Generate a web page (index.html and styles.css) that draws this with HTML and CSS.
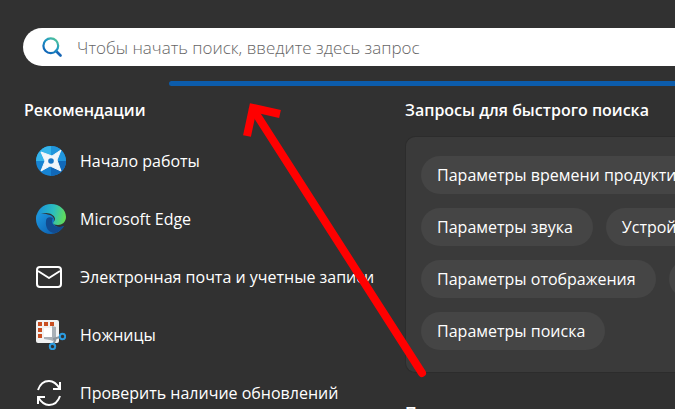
FILE: index.html
```html
<!DOCTYPE html>
<html lang="ru">
<head>
  <meta charset="UTF-8">
  <meta name="viewport" content="width=device-width, initial-scale=1.0">
  <title>Поиск</title>
  <link rel="stylesheet" href="styles.css">
</head>
<body>
  <form class="search">
    <svg class="search-icon" viewBox="0 0 20 20" fill="none">
      <defs>
        <linearGradient id="lens" x1="16" y1="1" x2="5" y2="15" gradientUnits="userSpaceOnUse">
          <stop offset="0" stop-color="#5fd08c"/>
          <stop offset="0.5" stop-color="#1f98c4"/>
          <stop offset="1" stop-color="#1268b8"/>
        </linearGradient>
      </defs>
      <path d="M14 14l4.500 4.500" stroke="#1766b5" stroke-width="2.600" stroke-linecap="round"/>
      <circle cx="8.800" cy="8.800" r="7.400" stroke="url(#lens)" stroke-width="2.200"/>
    </svg>
    <input class="search-input" type="text" aria-label="Поиск" placeholder="Чтобы начать поиск, введите здесь запрос">
  </form>
  <div class="underline"></div>

  <main class="columns">
    <section class="recommended">
      <h2 class="title">Рекомендации</h2>
      <ul class="apps">
        <li>
          <button class="app" type="button">
            <svg class="app-icon" viewBox="0 0 30 30">
              <circle cx="15" cy="15" r="15" fill="#1683d2"/>
              <path d="M15 15V0A15 15 0 0 0 0 15z" fill="#35b4ea"/>
              <path d="M15 15H30A15 15 0 0 0 15 0z" fill="#2196dc"/>
              <path d="M15 15V30A15 15 0 0 0 30 15z" fill="#1168b8"/>
              <path d="M5 6l11 4 9-6-4 10 4 11-11-5-9 5 4-10z" fill="#f1f6fa" stroke="#f1f6fa" stroke-linejoin="round"/>
              <circle cx="15" cy="15" r="2.800" fill="#1976c4"/>
            </svg>
            Начало работы
          </button>
        </li>
        <li>
          <button class="app" type="button">
            <svg class="app-icon" viewBox="0 0 30 30">
              <defs>
                <linearGradient id="wave" x1="2" y1="10" x2="30" y2="16" gradientUnits="userSpaceOnUse">
                  <stop offset="0" stop-color="#1b94d8"/>
                  <stop offset="0.5" stop-color="#2bbdc0"/>
                  <stop offset="1" stop-color="#68df4d"/>
                </linearGradient>
                <linearGradient id="body" x1="2" y1="12" x2="18" y2="28" gradientUnits="userSpaceOnUse">
                  <stop offset="0" stop-color="#1c93dc"/>
                  <stop offset="1" stop-color="#0d63b4"/>
                </linearGradient>
              </defs>
              <path d="M0 15C0 7 7 9 14 11c5 2 5 6 3 8 2 4 7 5 11 3-3 5-8 8-13 8C6 30 0 23 0 15z" fill="url(#body)"/>
              <path d="M10 17c-1 7 3 12 9 12 4-1 7-4 9-7-5 2-11 1-12-4 0-3 1-4 1-4-4-2-7 0-7 3z" fill="#124b8f"/>
              <path d="M0 14C1 6 7 0 15 0c9 0 15 6 15 13 0 5-4 8-8 8-3 0-5-1-5-2s2-2 2-4c0-3-4-6-9-6-5 0-9 2-10 5z" fill="url(#wave)"/>
            </svg>
            Microsoft Edge
          </button>
        </li>
        <li>
          <button class="app" type="button">
            <svg class="app-icon" viewBox="0 0 30 30" fill="none" stroke="#fff" stroke-width="2" stroke-linejoin="round">
              <rect x="1" y="5" width="24" height="20" rx="3"/>
              <path d="M2 9l11 7 11-7"/>
            </svg>
            Электронная почта и учетные записи
          </button>
        </li>
        <li>
          <button class="app" type="button">
            <svg class="app-icon" viewBox="0 0 30 30" fill="none">
              <rect width="23" height="23" rx="2" fill="#f2f2f2"/>
              <path d="M2 2h4v4H2zM8 2h4v4H8zM14 2h4v4h-4zM2 8h4v4H2zM2 14h4v4H2z" fill="#c94f22"/>
              <path d="M8 8h9v10H8z" fill="#fff"/>
              <path d="M16 6l4 1v13l-3 1-3-1-6-1v-2h8z" fill="#a9b0b7"/>
              <path d="M17 19l7-2M20 18l-3 7" stroke="#8d969e" stroke-width="2"/>
              <circle cx="26.500" cy="16.500" r="2.700" stroke="#2b9ade" stroke-width="2"/>
              <circle cx="16.500" cy="26.500" r="2.700" stroke="#2b9ade" stroke-width="2"/>
            </svg>
            Ножницы
          </button>
        </li>
        <li>
          <button class="app" type="button">
            <svg class="app-icon" viewBox="0 0 30 30" fill="none" stroke="#fff" stroke-width="2">
              <path d="M2 12C4 6 8 3 13 3c5 0 8 3 11 8M24 4v7h-7M24 18c-2 6-6 9-11 9-5 0-8-3-11-8M2 26v-7h7"/>
            </svg>
            Проверить наличие обновлений
          </button>
        </li>
      </ul>
    </section>

    <section class="quick">
      <h2 class="title">Запросы для быстрого поиска</h2>
      <div class="panel">
        <div class="row">
          <button class="chip" type="button">Параметры времени продуктивности</button>
        </div>
        <div class="row">
          <button class="chip" type="button">Параметры звука</button>
          <button class="chip" type="button">Устройства</button>
        </div>
        <div class="row">
          <button class="chip" type="button">Параметры отображения</button>
          <button class="chip" type="button">Параметры</button>
        </div>
        <div class="row">
          <button class="chip" type="button">Параметры поиска</button>
        </div>
      </div>
      <h2 class="title">Популярные</h2>
    </section>
  </main>

  <svg class="arrow" width="190" height="280" viewBox="0 0 190 280" fill="none" stroke="#f00" stroke-width="8">
    <path d="M41 14L14 8 8 36"/>
    <path d="M14 9l169 264" stroke-linecap="round"/>
  </svg>
</body>
</html>
```
FILE: styles.css
```css
* {
  padding: 0;
  margin: 0;
  box-sizing: border-box;
  font-family: "Open Sans", "Noto Sans", sans-serif;
}

html {
  height: 100%;
}

body {
  position: relative;
  height: 100%;
  overflow: hidden;
  padding: 28px 0 0 23px;
  background-color: #313131;
  color: #fff;
}

.search {
  display: flex;
  align-items: center;
  gap: 15px;
  height: 38px;
  padding-left: 19px;
  border-radius: 19px 0 0 19px;
  background-color: #fff;

  & > .search-icon {
    flex: none;
    width: 20px;
    height: 20px;
  }

  & > .search-input {
    flex: 1;
    min-width: 0;
    border: none;
    outline: none;
    background: none;
    font-size: 17px;
    font-weight: 300;

    &::placeholder {
      color: #666;
      opacity: 1;
    }
  }
}

.underline {
  height: 5px;
  margin: 15px 0 0 146px;
  border-radius: 3px 0 0 3px;
  background-color: #0c5cab;
}

.columns {
  display: grid;
  grid-template-columns: minmax(0, 24fr) minmax(0, 17fr);
  padding: 12px 0 0 1px;
}

.title {
  font-size: 16px;
  font-weight: 600;
  line-height: 24px;
  white-space: nowrap;
}

.apps {
  list-style: none;
  padding-top: 10px;
}

.app {
  display: flex;
  align-items: center;
  gap: 14px;
  width: 100%;
  height: 58px;
  padding-left: 12px;
  border: none;
  background: none;
  color: #fff;
  font-size: 16px;
  white-space: nowrap;

  & > .app-icon {
    flex: none;
    width: 30px;
    height: 30px;
  }
}

.panel {
  display: flex;
  flex-direction: column;
  gap: 14px;
  margin: 14px 0 28px;
  padding: 19px 0 22px 15px;
  border: 1px solid #2c2c2c;
  border-right: none;
  border-radius: 10px 0 0 10px;
  background-color: #3a3a3a;
  overflow: hidden;

  & > .row {
    display: flex;
    gap: 13px;
  }
}

.chip {
  flex: none;
  height: 38px;
  padding: 0 20px 0 16px;
  border: none;
  border-radius: 19px;
  background-color: #454545;
  color: #fff;
  font-size: 16px;
  white-space: nowrap;
}

.arrow {
  position: absolute;
  top: 100px;
  left: 239px;
  pointer-events: none;
}
```
